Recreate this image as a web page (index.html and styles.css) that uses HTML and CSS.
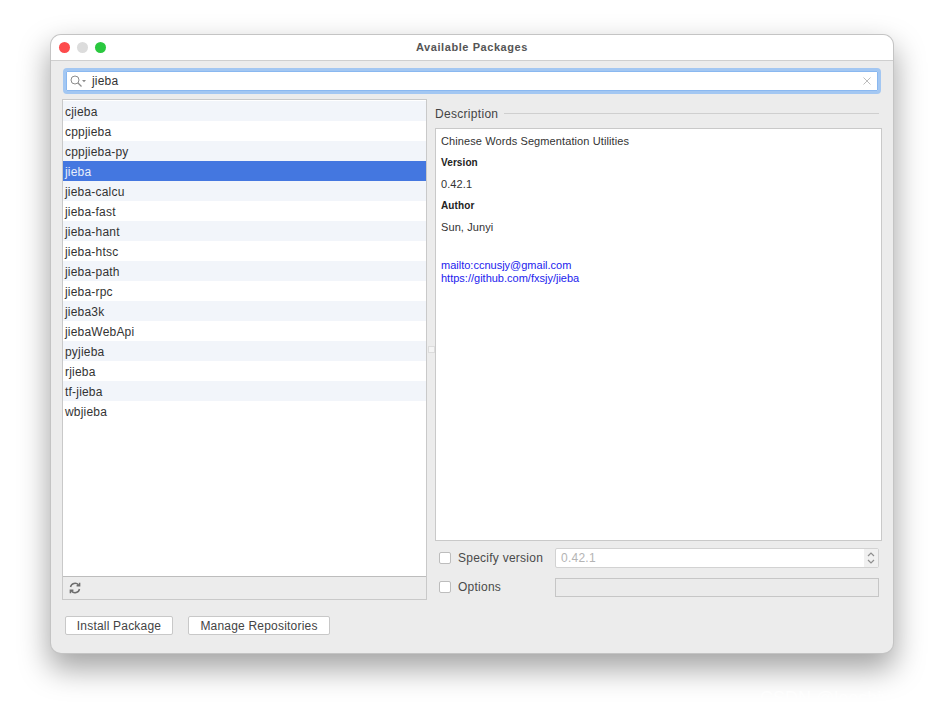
FILE: index.html
```html
<!DOCTYPE html>
<html>
<head>
    <meta name="viewport" content="width=device-width, initial-scale=1">
    <link rel="stylesheet" href="styles.css">
</head>

<body>
    <div class="window">
        <div class="titlebar">
            <span class="light red"></span>
            <span class="light grey"></span>
            <span class="light green"></span>
            <span class="title">Available Packages</span>
        </div>

        <div class="content">
            <div class="search">
                <svg class="search-icon" width="17" height="12" viewBox="0 0 17 12">
                    <circle cx="5" cy="5" r="4" fill="none" stroke="#8c8c8c" stroke-width="1"/>
                    <path d="M8 8l3.5 3.5" stroke="#8c8c8c" stroke-width="1.2"/>
                    <path d="M12 5h4l-2 2.2z" fill="#8c8c8c"/>
                </svg>
                <span class="search-text">jieba</span>
                <svg class="search-clear" width="8" height="8" viewBox="0 0 8 8">
                    <path d="M.5.5l7 7M7.5.5l-7 7" stroke="#bdbdbd" stroke-width="1"/>
                </svg>
            </div>

            <div class="panes">
                <div class="left">
                    <ul class="list">
                        <li>cjieba</li>
                        <li>cppjieba</li>
                        <li>cppjieba-py</li>
                        <li class="selected">jieba</li>
                        <li>jieba-calcu</li>
                        <li>jieba-fast</li>
                        <li>jieba-hant</li>
                        <li>jieba-htsc</li>
                        <li>jieba-path</li>
                        <li>jieba-rpc</li>
                        <li>jieba3k</li>
                        <li>jiebaWebApi</li>
                        <li>pyjieba</li>
                        <li>rjieba</li>
                        <li>tf-jieba</li>
                        <li>wbjieba</li>
                    </ul>
                    <div class="list-footer">
                        <svg width="12" height="12" viewBox="0 0 12 12" fill="none" stroke="#6e6e6e" stroke-width="1.5">
                            <path d="M1.5 5A4.6 4.6 0 0 1 9.6 3"/>
                            <path d="M10.5 7A4.6 4.6 0 0 1 2.4 9"/>
                            <path d="M10.6.8v3H7.6M1.4 11.2v-3h3"/>
                        </svg>
                    </div>
                </div>

                <div class="splitter"><span class="handle"></span></div>

                <div class="right">
                    <div class="group-title">
                        <span>Description</span>
                        <span class="group-line"></span>
                    </div>
                    <div class="description">
                        <p>Chinese Words Segmentation Utilities</p>
                        <h4>Version</h4>
                        <p>0.42.1</p>
                        <h4>Author</h4>
                        <p>Sun, Junyi</p>
                        <div class="links">
                            <a href="#">mailto:ccnusjy@gmail.com</a>
                            <a href="#">https://github.com/fxsjy/jieba</a>
                        </div>
                    </div>
                    <div class="option-row">
                        <span class="checkbox"></span>
                        <label class="option-label">Specify version</label>
                        <div class="spinbox">
                            <span class="spin-value">0.42.1</span>
                            <span class="spin-arrows">
                                <svg width="8" height="14" viewBox="0 0 8 14" fill="none" stroke="#8f8f8f" stroke-width="1.2">
                                    <path d="M1 5l3-3 3 3M1 9l3 3 3-3"/>
                                </svg>
                            </span>
                        </div>
                    </div>
                    <div class="option-row options">
                        <span class="checkbox"></span>
                        <label class="option-label">Options</label>
                        <div class="disabled-field"></div>
                    </div>
                </div>
            </div>

            <div class="buttons">
                <button>Install Package</button>
                <button class="manage">Manage Repositories</button>
            </div>
        </div>
    </div>
    <div class="watermark">CSDN @leeshiy</div>
</body>
</html>
```

FILE: styles.css
```css
html, body {
    margin: 0;
    height: 720px;
    overflow: hidden;
}

body {
    background-color: #fff;
    font-family: "Liberation Sans", Arial, sans-serif;
    color: #333;
    position: relative;
}

.window {
    width: 842px;
    height: 618px;
    margin: 35px 0 0 51px;
    box-sizing: border-box;
    background-color: #ececec;
    border-radius: 10px;
    box-shadow: 0 0 0 1px #c4c4c4, 0 14px 30px 2px rgba(0, 0, 0, 0.36);
    overflow: hidden;
}

/* Title bar */
.titlebar {
    height: 25px;
    background-color: #fff;
    border-bottom: 1px solid #cfcfcf;
    display: flex;
    align-items: center;
    padding-left: 8px;
    gap: 7px;
    position: relative;
}

.light {
    width: 11px;
    height: 11px;
    border-radius: 50%;
}

.red { background-color: #fd4b4c; }
.grey { background-color: #dcdcdc; }
.green { background-color: #2ac83f; }

.title {
    position: absolute;
    left: 0;
    right: 0;
    padding-bottom: 2px;
    text-align: center;
    font-size: 11px;
    font-weight: bold;
    color: #555;
    letter-spacing: 0.57px;
}

.content {
    padding: 7px 11px 0 11px;
}

/* Search */
.search {
    height: 26px;
    width: 818px;
    margin-left: 1px;
    box-sizing: border-box;
    background-color: #fff;
    border: 3px solid #a3c7f2;
    border-radius: 4px;
    box-shadow: inset 0 0 0 1px #8ab8f0;
    display: flex;
    align-items: center;
}

.search-icon {
    margin-left: 4px;
}

.search-text {
    margin-left: 5px;
    font-size: 12px;
    letter-spacing: 0.2px;
    color: #333;
    flex: 1;
}

.search-clear {
    margin-right: 7px;
}

.panes {
    display: flex;
    margin-top: 5px;
    height: 501px;
}

/* Package list */
.left {
    width: 365px;
    display: flex;
    flex-direction: column;
    border: 1px solid #c9c9c9;
    box-sizing: border-box;
}

.list {
    list-style: none;
    margin: 0;
    padding: 1px 0 0 0;
    background-color: #fff;
    flex: 1;
    border-bottom: 1px solid #bdbdbd;
}

.list li {
    height: 20px;
    line-height: 22px;
    padding-left: 2px;
    font-size: 12px;
    letter-spacing: 0.2px;
    color: #333;
}

.list li:nth-child(odd) {
    background-color: #f2f5fa;
}

.list li.selected {
    background-color: #4477e0;
    color: #e8eefb;
}

.list-footer {
    height: 22px;
    display: flex;
    align-items: center;
    padding-left: 6px;
}

.splitter {
    width: 8px;
    display: flex;
    align-items: center;
    justify-content: center;
}

.handle {
    width: 7px;
    height: 7px;
    box-sizing: border-box;
    background-color: #f4f4f4;
    border: 1px solid #dcdcdc;
}

/* Right side */
.right {
    width: 447px;
    display: flex;
    flex-direction: column;
}

.group-title {
    height: 29px;
    display: flex;
    align-items: center;
    gap: 6px;
    font-size: 12px;
    letter-spacing: 0.3px;
    color: #444;
}

.group-line {
    flex: 1;
    height: 1px;
    margin-right: 3px;
    background-color: #cfcfcf;
}

.description {
    height: 413px;
    box-sizing: border-box;
    background-color: #fff;
    border: 1px solid #c9c9c9;
    padding: 6px 5px;
    font-size: 11px;
    letter-spacing: 0.1px;
    color: #333;
}

.description p {
    margin: 0;
    line-height: 13px;
}

.description h4 {
    margin: 9px 0;
    font-size: 10px;
    line-height: 12px;
    color: #222;
}

.links {
    margin-top: 25px;
}

.links a {
    display: block;
    line-height: 13px;
    letter-spacing: 0;
    color: #2222ee;
    text-decoration: none;
}

.option-row {
    display: flex;
    align-items: center;
    margin-top: 7px;
    height: 20px;
    font-size: 12px;
    letter-spacing: 0.25px;
    color: #4a4a4a;
}

.option-row.options {
    margin-top: 9px;
}

.checkbox {
    width: 12px;
    height: 12px;
    margin-left: 4px;
    box-sizing: border-box;
    background-color: #fff;
    border: 1px solid #bdbdbd;
    border-radius: 2px;
}

.option-label {
    margin-left: 7px;
    width: 97px;
}

.spinbox {
    width: 324px;
    height: 20px;
    box-sizing: border-box;
    background-color: #fff;
    border: 1px solid #d2d2d2;
    border-radius: 2px;
    display: flex;
    align-items: center;
    justify-content: space-between;
}

.spin-value {
    margin-left: 5px;
    color: #b4b4b4;
}

.spin-arrows {
    width: 14px;
    height: 18px;
    background-color: #f0f0f0;
    display: flex;
    align-items: center;
    justify-content: center;
}

.disabled-field {
    width: 324px;
    height: 19px;
    box-sizing: border-box;
    border: 1px solid #c6c6c6;
    background-color: #ebebeb;
}

/* Bottom buttons */
.buttons {
    display: flex;
    gap: 15px;
    margin-top: 16px;
    margin-left: 3px;
}

.buttons button {
    width: 108px;
    height: 19px;
    padding: 0;
    background-color: #fff;
    border: 1px solid #c8c8c8;
    border-radius: 2px;
    font-family: "Liberation Sans", Arial, sans-serif;
    font-size: 12px;
    letter-spacing: 0.2px;
    color: #444;
}

.buttons .manage {
    width: 142px;
}

.watermark {
    position: absolute;
    left: 760px;
    top: 688px;
    font-size: 18px;
    color: rgba(255, 255, 255, 0.7);
}
```
